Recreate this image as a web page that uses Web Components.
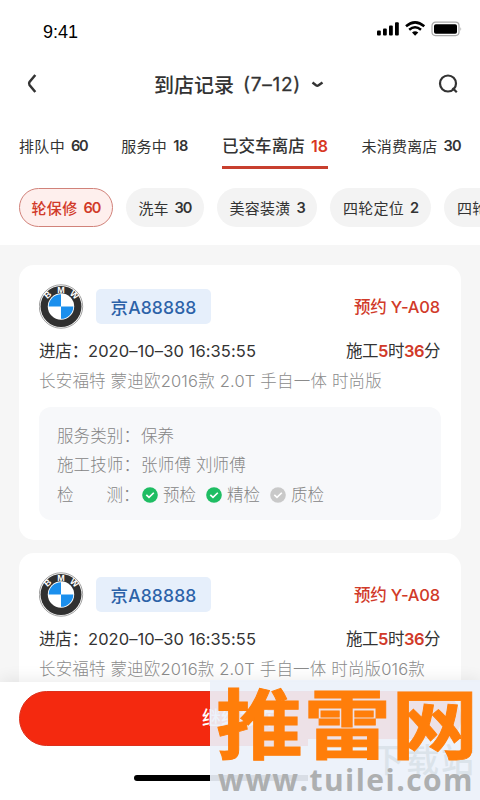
<!DOCTYPE html>
<html lang="zh-CN">
<head>
<meta charset="utf-8">
<title>到店记录</title>
<style>
html,body{margin:0;width:480px;height:800px;overflow:hidden;background:#fff}
body{font-family:Inter,"Noto Sans CJK SC",sans-serif;color:#333}
</style>
</head>
<body>
<store-app></store-app>
<script>
function define(name, html, setup) {
  const t = document.createElement('template');
  t.innerHTML = html;
  customElements.define(name, class extends HTMLElement {
    connectedCallback() {
      if (this.shadowRoot) return;
      this.attachShadow({mode: 'open'}).append(t.content.cloneNode(true));
      if (setup) setup(this, this.shadowRoot);
    }
  });
}

/* One line of text whose tracking is spread so that it fills the width w. */
define('fit-text', `<style>
:host{display:block;flex:none;white-space:pre;line-height:1.2}
span{display:inline-block}
</style><span><slot></slot></span>`, (host, root) => {
  const w = +host.getAttribute('w'), s = root.querySelector('span');
  host.style.width = w + 'px';
  const n = [...host.textContent].length;
  s.style.letterSpacing = (w - s.getBoundingClientRect().width) / n + 'px';
});

define('status-bar', `<style>
:host{display:flex;flex:none;height:56px;box-sizing:border-box;padding:3px 18px 0 43px;align-items:center;color:#000}
fit-text{font:18px/20px "Liberation Sans",sans-serif;margin-top:5px}
svg{margin-left:auto;margin-top:-1px}
</style><fit-text w="35">9:41</fit-text>
<svg width="86" height="16" viewBox="0 0 86 16">
<rect x="1" y="9.5" width="3.8" height="5" rx="1"/><rect x="7" y="7.5" width="3.8" height="7" rx="1"/><rect x="13" y="4.5" width="3.8" height="10" rx="1"/><rect x="19" y="1.2" width="3.8" height="13.3" rx="1"/>
<g fill="none" stroke="#000" stroke-width="2.5"><path d="M30 5.3Q39-2.6 48.3 5.3"/><path d="M33.2 8.8Q39 3.7 45 8.8"/></g><path d="M36 11.5Q39 8.8 42.3 11.5L39.1 14.7Z"/>
<rect x="56" y="1.2" width="27" height="13.4" rx="3.5" fill="none" stroke="#aaa" stroke-width="1.2"/><rect x="58" y="3.2" width="23" height="9.5" rx="1.8"/><path d="M84.5 6Q86 8 84.5 10Z" fill="#999"/>
</svg>`);

define('title-bar', `<style>
:host{display:grid;flex:none;grid-template-columns:154px auto 1fr auto;align-items:center;height:58px;padding-right:20px;box-sizing:border-box}
.t{display:flex;gap:9px;align-items:center;font-size:20px;font-weight:500;padding-top:1px}
.t svg{margin-left:1px;margin-top:-2px}
.back{margin-left:26px;margin-top:-2px}
.find{grid-column:4;margin-right:1px;margin-top:-2px}
.d{font-weight:400;font-size:19px;-webkit-text-stroke:.3px}
svg{fill:none;stroke:#333}
</style>
<svg class="back" width="13" height="22" viewBox="0 0 13 22" stroke-width="2.5"><path d="M9.3 2L3.5 9Q2.5 10.5 3.5 12L9.3 19"/></svg>
<div class="t"><fit-text w="80">到店记录</fit-text><fit-text class="d" w="58">(7–12)</fit-text>
<svg width="13" height="8" viewBox="0 0 13 8" stroke-width="2.4"><path d="M1.5 1.5L5 4.3Q6.3 5.2 7.6 4.3L11.5 1.5"/></svg></div>
<svg class="find" width="22" height="22" viewBox="0 0 22 22" stroke-width="2.2"><circle cx="11" cy="10.5" r="8"/><path d="M15.5 15L19.8 19.3"/></svg>`);

define('nav-tab', `<style>
:host{display:flex;flex:none;gap:6px;height:46px;box-sizing:border-box;align-items:center;padding-top:5px;font-size:15px;border-bottom:3px solid transparent;--n:#333}
:host([active]){font-size:16.5px;font-weight:500;border-color:#c83f2e;--n:#d83724}
.n{font-weight:600;color:var(--n);font-size:.97em}
</style><fit-text class="l"></fit-text><fit-text class="n"></fit-text>`, fillPair);
define('filter-chip', `<style>
:host{display:flex;flex:none;gap:6px;width:var(--cw);height:39px;box-sizing:border-box;align-items:center;justify-content:center;padding-top:3px;font-size:15px;border-radius:20px;background:#f3f3f3}
:host([active]){color:#d13a29;background:#feefed;border:1px solid #d1827a;font-weight:500}
.n{font-weight:600;font-size:.97em}
</style><fit-text class="l"></fit-text><fit-text class="n"></fit-text>`, fillPair);

function fillPair(host, root) {
  for (const k of ['l', 'n']) {
    const old = root.querySelector('.' + k), e = document.createElement('fit-text');
    e.className = k;
    e.setAttribute('w', host.getAttribute(k + 'w'));
    e.textContent = host.getAttribute(k === 'l' ? 'label' : 'count');
    old.replaceWith(e);
  }
  if (host.hasAttribute('cw')) host.style.setProperty('--cw', host.getAttribute('cw') + 'px');
}

define('car-logo', `<style>:host{display:block;width:45px;height:45px}text{font:bold 9px "Liberation Sans",sans-serif;fill:#fff;text-anchor:middle}</style>
<svg width="45" height="45" viewBox="0 0 45 45"><circle cx="22" cy="22.5" r="21.7" fill="#fff" stroke="#777" stroke-width=".7"/><circle cx="22" cy="22.5" r="20.5" fill="#303030"/>
<circle cx="22" cy="22.5" r="13.2" fill="#fff"/><path d="M22 22.5H9.7A12.3 12.3 0 0 1 22 10.2ZM22 22.5H34.3A12.3 12.3 0 0 1 22 34.8Z" fill="#1b8fed"/>
<text transform="translate(10.6 13) rotate(-42)">B</text><text x="22" y="8.8">M</text><text transform="translate(33.4 13) rotate(42)">W</text></svg>`);

define('check-item', `<style>
:host{display:flex;align-items:center;gap:5px;--c:#1fbd63}
:host([off]){--c:#c9c9c9}
svg{margin-top:-2px}
</style><svg width="16" height="16" viewBox="0 0 16 16"><circle cx="8" cy="8" r="7.8" fill="var(--c)"/><path d="M4.3 7.8L7 10.4L11.8 5.7" fill="none" stroke="#fff" stroke-width="1.6"/></svg><slot></slot>`);

define('service-box', `<style>
:host{display:grid;grid-auto-rows:29.6px;height:113px;box-sizing:border-box;padding:15px 18px 0;border-radius:12px;background:#f7f8fa;color:#858585;font-size:16.5px;font-weight:300}
.r{display:flex;align-items:center}
.k{width:84px}
.c{display:flex;gap:10px;padding-left:1px}
.w{display:flex;width:66px;justify-content:space-between}
</style>
<div class="r"><div class="k"><fit-text w="83">服务类别：</fit-text></div><fit-text w="33">保养</fit-text></div>
<div class="r"><div class="k"><fit-text w="83">施工技师：</fit-text></div><fit-text w="105">张师傅 刘师傅</fit-text></div>
<div class="r"><div class="k" style="display:flex"><span class="w"><fit-text w="16.5">检</fit-text><fit-text w="16.5">测</fit-text></span><fit-text w="16.5">：</fit-text></div>
<div class="c"><check-item><fit-text w="33">预检</fit-text></check-item><check-item><fit-text w="33">精检</fit-text></check-item><check-item off><fit-text w="33">质检</fit-text></check-item></div></div>`);

define('visit-card', `<style>
:host{display:block;height:275px;box-sizing:border-box;padding:19px 20px;border-radius:15px;background:#fff}
.top,.mid{display:flex;align-items:center;justify-content:space-between}
.top{height:45px}
.mid{height:30px;margin-top:8px;font-size:16.5px;padding-right:1px}
.plate{display:flex;align-items:center;justify-content:center;width:115px;height:35px;box-sizing:border-box;padding-top:2px;margin:0 auto 0 12px;border-radius:5px;background:#e6effb;color:#2c62a8;font-size:17.5px;font-weight:500}
.book{color:#d13a29;font-size:16.5px;font-weight:500;margin-right:1px;padding-top:2px}
.time,.dur{display:flex}
.dur b{color:#d13a29;font-weight:600}
.model{height:26px;padding-top:5px;box-sizing:border-box;color:#8b8b8b;font-size:16.5px;font-weight:300;margin-bottom:14px}
</style>
<div class="top"><car-logo></car-logo><div class="plate"><fit-text w="86">京A88888</fit-text></div><fit-text class="book" w="86">预约 Y-A08</fit-text></div>
<div class="mid"><div class="time"><fit-text w="49">进店：</fit-text><fit-text w="168">2020–10–30 16:35:55</fit-text></div><fit-text class="dur" w="94">施工<b>5</b>时<b>36</b>分</fit-text></div>
<div class="model"></div><service-box></service-box>`, (host, root) => {
  const e = document.createElement('fit-text');
  e.setAttribute('w', host.getAttribute('mw'));
  e.textContent = host.getAttribute('model');
  root.querySelector('.model').append(e);
});

define('site-mark', `<style>
:host{position:absolute;left:210px;top:680px;width:270px;height:120px;overflow:hidden;background:rgba(235,241,250,.92)}
.g,.c,.u{position:absolute}
.g{left:161px;top:61px;font-size:33px;font-weight:500;color:#dbe3ea}
.c{left:6px;top:-15px;font-family:"Noto Sans CJK SC",sans-serif;font-size:87px;font-weight:700;color:#ff7e0a;transform:scaleY(.88);-webkit-text-stroke:1px #ff7e0a}
.c,.c *{line-height:110px}
.u{left:8px;top:79px;font:bold 30px "Open Sans","Noto Sans",sans-serif;color:#adafb0}
</style><fit-text class="g" w="105">下载站</fit-text><fit-text class="c" w="263">推雷网</fit-text><fit-text class="u" w="256">www.tuilei.com</fit-text>`);

define('bottom-bar', `<style>
:host{position:absolute;left:0;top:682px;width:480px;height:118px;background:#fff;box-shadow:0 -4px 14px rgba(0,0,0,.07)}
.b{display:flex;align-items:center;justify-content:center;width:442px;height:55px;box-sizing:border-box;margin:9px 0 0 19px;border-radius:28px;background:#f4290f;border:1px solid #dc301c;color:#fff;font-size:19px;font-weight:500;padding-top:2px}
.h{width:212px;height:6px;border-radius:3px;background:#000;margin:29px 0 0 134px}
.veil{position:absolute;left:308px;top:57px;width:172px;height:61px;background:#fbfdfc}
</style><div class="b"><fit-text w="76">继续接车</fit-text></div><div class="h"></div><div class="veil"></div>`);

define('store-app', `<style>
:host{display:flex;flex-direction:column;position:relative;width:480px;height:800px;overflow:hidden}
.tabs{display:flex;flex:none;height:46px;padding:9px 0 19px 19px}
.tabs nav-tab+nav-tab{margin-left:33.7px}
.chips{display:flex;flex:none;gap:13px;height:57px;padding-left:19px;overflow:hidden}
.list{flex:1;min-height:0;background:#f6f6f6;padding:20px 19px;display:grid;gap:13px;align-content:start}
</style>
<status-bar></status-bar><title-bar></title-bar>
<div class="tabs"><nav-tab label="排队中" count="60" lw="46" nw="16.5"></nav-tab><nav-tab label="服务中" count="18" lw="46" nw="15"></nav-tab><nav-tab active label="已交车离店" count="18" lw="83" nw="17"></nav-tab><nav-tab label="未消费离店" count="30" lw="76" nw="17"></nav-tab></div>
<div class="chips"><filter-chip active label="轮保修" count="60" lw="46" nw="17" cw="94"></filter-chip><filter-chip label="洗车" count="30" lw="30" nw="17" cw="78"></filter-chip><filter-chip label="美容装潢" count="3" lw="61" nw="8" cw="100"></filter-chip><filter-chip label="四轮定位" count="2" lw="61" nw="8" cw="101"></filter-chip><filter-chip label="四轮定位" count="2" lw="61" nw="8" cw="101"></filter-chip></div>
<div class="list"><visit-card mw="343" model="长安福特 蒙迪欧2016款 2.0T 手自一体 时尚版"></visit-card><visit-card mw="386" model="长安福特 蒙迪欧2016款 2.0T 手自一体 时尚版016款"></visit-card></div>
<bottom-bar></bottom-bar><site-mark></site-mark>`);
</script>
</body>
</html>
